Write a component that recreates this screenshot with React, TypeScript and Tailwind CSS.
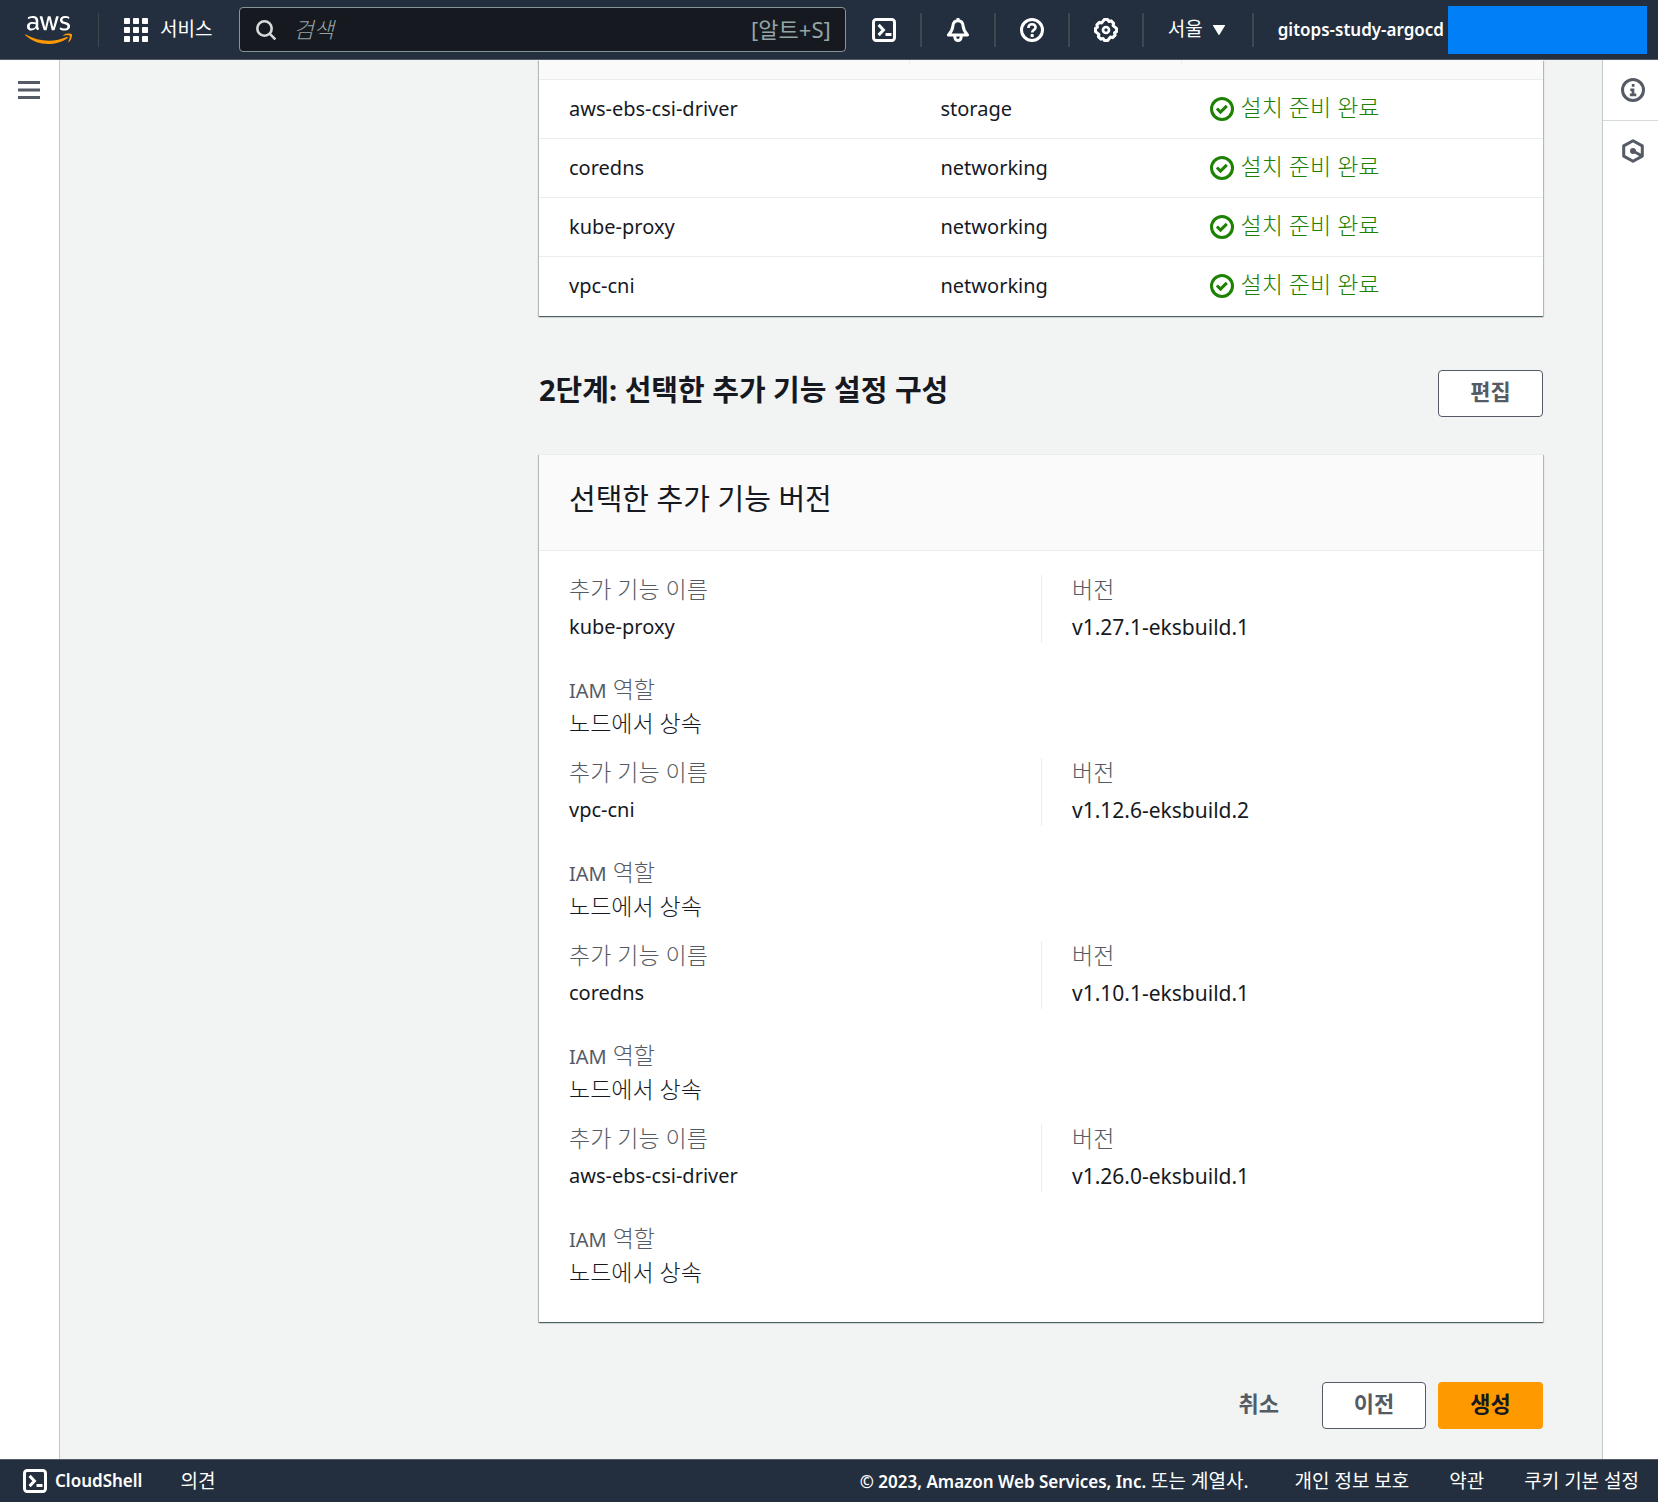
import type { ReactNode } from "react";
import { FaAws } from "react-icons/fa";

const addons = [
  { name: "aws-ebs-csi-driver", category: "storage" },
  { name: "coredns", category: "networking" },
  { name: "kube-proxy", category: "networking" },
  { name: "vpc-cni", category: "networking" },
];

const versions = [
  { name: "kube-proxy", version: "v1.27.1-eksbuild.1" },
  { name: "vpc-cni", version: "v1.12.6-eksbuild.2" },
  { name: "coredns", version: "v1.10.1-eksbuild.1" },
  { name: "aws-ebs-csi-driver", version: "v1.26.0-eksbuild.1" },
];

function Icon({ children }: { children: ReactNode }) {
  return (
    <svg
      viewBox="0 0 16 16"
      className="size-6 shrink-0"
      fill="none"
      stroke="currentColor"
      strokeWidth="2"
      aria-hidden="true"
    >
      {children}
    </svg>
  );
}

function CloudShellIcon() {
  return (
    <Icon>
      <rect x="1" y="1" width="14" height="14" rx="1.8" />
      <path d="M4.4 4.6 7.6 8l-3.2 3.4" />
      <path d="M9 11h4" />
    </Icon>
  );
}

function BellIcon() {
  return (
    <Icon>
      <path
        d="M8 1.8c1.9 0 3.2 1.4 3.4 3.4.2 2.5 1 4 3 6.1H1.6c2-2.1 2.8-3.6 3-6.1C4.8 3.2 6.1 1.8 8 1.8Z"
        strokeLinejoin="round"
      />
      <path d="M8 0v2" />
      <path d="M5.9 11.5v1.4a2.1 2.1 0 0 0 4.2 0v-1.4" />
    </Icon>
  );
}

function HelpIcon() {
  return (
    <Icon>
      <circle cx="8" cy="8" r="7" />
      <path d="M5.6 6.6c0-1.6 1-2.5 2.4-2.5s2.4.9 2.4 2.2c0 1.7-2.3 1.5-2.3 3.4" strokeWidth="1.7" />
      <path d="M8.1 10.7v2" />
    </Icon>
  );
}

function GearIcon() {
  return (
    <Icon>
      <path
        d="M6.9 1h2.2l.8 1.300 1.500-.4 1.700 1.700-.4 1.500L15 6.900v2.200l-1.300.8.4 1.500-1.700 1.700-1.500-.4L9.100 15H6.900l-.8-1.300-1.500.4-1.700-1.700.4-1.500L1 9.100V6.900l1.300-.8-.4-1.500 1.700-1.700 1.500.4Z"
        strokeLinejoin="round"
      />
      <circle cx="8" cy="8" r="2" strokeWidth="1.8" />
    </Icon>
  );
}

function CheckIcon() {
  return (
    <Icon>
      <circle cx="8" cy="8" r="7" />
      <path d="m4.6 7.7 2.4 2.4 4.2-4.2" />
    </Icon>
  );
}

function InfoIcon() {
  return (
    <Icon>
      <circle cx="8" cy="8" r="7" />
      <path d="M7.2 4.9h1.8M6.200 7.900H8v3.200M5.900 11.300h4.300" strokeWidth="1.8" />
    </Icon>
  );
}

function HexIcon() {
  return (
    <Icon>
      <path d="m8 1.200 6.200 3.400v6.800L8 14.800l-6.200-3.400V4.600Z" strokeLinejoin="round" />
      <circle cx="8" cy="8" r="2" fill="currentColor" stroke="none" />
      <path d="m8 8 5.500 3" />
    </Icon>
  );
}

function Divider() {
  return <div className="h-[34px] w-0.5 shrink-0 bg-[#414750]" />;
}

function TopBar() {
  return (
    <header className="flex h-[60px] shrink-0 items-center border-b border-[#545b64] bg-[#232f3e] pr-[11px] pl-[25px] text-white">
      <svg width="0" height="0" className="absolute" aria-hidden="true">
        <defs>
          <linearGradient id="aws-fill" gradientUnits="userSpaceOnUse" x1="0" y1="0" x2="0" y2="512">
            <stop offset="0.59" stopColor="#ffffff" />
            <stop offset="0.59" stopColor="#ff9900" />
          </linearGradient>
        </defs>
      </svg>
      <a href="#home" aria-label="AWS" className="mr-[26px] shrink-0">
        <FaAws className="h-[38px] w-[47px] fill-[url(#aws-fill)]" />
      </a>
      <div className="h-[34px] w-px bg-[#414750]" />
      <button className="ml-[25px] flex shrink-0 items-center gap-3 text-[19px]">
        <svg viewBox="0 0 24 24" className="size-6" fill="currentColor" aria-hidden="true">
          {[0, 9, 18].map((y) =>
            [0, 9, 18].map((x) => <rect key={`${x}-${y}`} x={x} y={y} width="6" height="6" rx="0.8" />),
          )}
        </svg>
        서비스
      </button>
      <label className="mr-[26px] ml-[27px] flex h-[45px] min-w-0 flex-1 items-center rounded-sm border border-[#879596] bg-[#16191f] pr-3.5 pl-4 text-[22px] text-[#95a5a6]">
        <svg viewBox="0 0 20 20" className="size-5 shrink-0 text-[#d5dbdb]" fill="none" stroke="currentColor" strokeWidth="2.6" aria-hidden="true">
          <circle cx="8.5" cy="8.5" r="7.2" />
          <path d="m13.6 13.6 5.8 5.8" />
        </svg>
        <input
          type="search"
          aria-label="검색"
          placeholder="검색"
          className="ml-[17px] min-w-0 flex-1 bg-transparent font-light outline-none placeholder:text-[#95a5a6] placeholder:italic"
        />
        <span>[알트+S]</span>
      </label>
      <div className="flex shrink-0 items-center gap-6">
        <button aria-label="CloudShell">
          <CloudShellIcon />
        </button>
        <Divider />
        <button aria-label="알림">
          <BellIcon />
        </button>
        <Divider />
        <button aria-label="도움말">
          <HelpIcon />
        </button>
        <Divider />
        <button aria-label="설정">
          <GearIcon />
        </button>
        <Divider />
        <button className="flex items-center gap-2.5 pr-[3px] text-[19px]">
          서울
          <svg viewBox="0 0 12 10" className="h-2.5 w-3" fill="currentColor" aria-hidden="true">
            <path d="M.6 0h10.8a.5.5 0 0 1 .4.9L6.6 9.6a.7.7 0 0 1-1.2 0L.2.9A.5.5 0 0 1 .6 0Z" />
          </svg>
        </button>
        <Divider />
        <button className="flex items-center gap-1 text-[17px] font-semibold">
          gitops-study-argocd
          <span className="h-12 w-[199px] bg-[#007ff7]" />
        </button>
      </div>
    </header>
  );
}

function Card({ children }: { children: ReactNode }) {
  return (
    <section className="bg-white shadow-[0_1px_1px_0_rgba(0,28,36,0.5),1px_1px_1px_0_rgba(0,28,36,0.2),-1px_1px_1px_0_rgba(0,28,36,0.2)]">
      {children}
    </section>
  );
}

function AddonTable() {
  return (
    <Card>
      <table className="w-full table-fixed border-collapse text-left text-[20px]">
        <thead className="bg-[#fafafa]">
          <tr className="h-[19px] border-b border-[#eaeded] align-top">
            <th aria-label="추가 기능 이름" className="w-[37%] p-0">
              <div className="h-[5px] border-r border-[#eaeded]" />
            </th>
            <th aria-label="유형" className="w-[27%] p-0">
              <div className="h-[5px] border-r border-[#eaeded]" />
            </th>
            <th aria-label="상태" className="p-0" />
          </tr>
        </thead>
        <tbody>
          {addons.map((addon) => (
            <tr key={addon.name} className="h-[59px] border-b border-[#eaeded] last:border-white">
              <td className="py-0 pl-[30px]">{addon.name}</td>
              <td className="py-0 pl-[30px]">{addon.category}</td>
              <td className="py-0 pl-7">
                <span className="flex items-center gap-[7px] text-[23px] leading-6 font-light text-[#1d8102]">
                  <CheckIcon />
                  <span className="pb-1">설치 준비 완료</span>
                </span>
              </td>
            </tr>
          ))}
        </tbody>
      </table>
    </Card>
  );
}

function Field({ label, children }: { label: ReactNode; children: ReactNode }) {
  return (
    <div>
      <dt className="text-[23px] leading-7 font-light text-[#545b64]">{label}</dt>
      {children}
    </div>
  );
}

export default function App() {
  return (
    <div
      lang="ko"
      className="flex min-h-screen flex-col bg-[#f2f3f3] font-['Noto_Sans','Noto_Sans_CJK_KR',sans-serif] text-[#16191f]"
    >
      <TopBar />
      <div className="flex flex-1">
        <nav className="w-[60px] shrink-0 border-r border-[#c3c8c8] bg-white pt-5 pl-[18px] text-[#545b64]">
          <button aria-label="메뉴">
            <svg viewBox="0 0 22 20" className="h-5 w-[22px]" fill="none" stroke="currentColor" strokeWidth="3" aria-hidden="true">
              <path d="M0 2.5h22M0 10h22M0 17.5h22" />
            </svg>
          </button>
        </nav>
        <main className="min-w-0 flex-1 pr-[59px] pl-[479px]">
          <AddonTable />
          <div className="mt-[54px] flex items-start justify-between">
            <h2 className="text-[29px] leading-10 font-bold">2단계: 선택한 추가 기능 설정 구성</h2>
            <button className="h-[47px] w-[105px] rounded-sm border border-[#545b64] bg-white pb-1 text-[22px] font-bold text-[#545b64]">
              편집
            </button>
          </div>
          <div className="mt-[37px]">
            <Card>
              <h3 className="h-[97px] border-y border-[#eaeded] bg-[#fafafa] px-[30px] pt-6 text-[29px] leading-10">
                선택한 추가 기능 버전
              </h3>
              <div className="flex flex-col gap-[15px] px-[30px] pt-6 pb-[30px]">
                {versions.map((item) => (
                  <dl key={item.name} className="grid grid-cols-2 gap-y-8">
                    <Field label="추가 기능 이름">
                      <dd className="mt-2 text-[20px] leading-8">{item.name}</dd>
                    </Field>
                    <div className="border-l border-[#eaeded] pl-[30px]">
                      <Field label="버전">
                        <dd className="mt-2 text-[21px] leading-8">{item.version}</dd>
                      </Field>
                    </div>
                    <Field
                      label={
                        <>
                          <span className="text-[20px] leading-none font-normal">IAM</span> 역할
                        </>
                      }
                    >
                      <dd className="mt-1 mb-1 text-[23px] leading-8 font-light">노드에서 상속</dd>
                    </Field>
                  </dl>
                ))}
              </div>
            </Card>
          </div>
          <div className="mt-[60px] mb-[30px] flex justify-end gap-3 text-[22px] font-bold text-[#545b64]">
            <button className="mr-[19px] h-[47px] px-3 pb-1">취소</button>
            <button className="h-[47px] w-[104px] rounded-sm border border-[#545b64] bg-white pb-1">이전</button>
            <button className="h-[47px] w-[105px] rounded-sm bg-[#ff9900] pb-1 text-[#16191f]">생성</button>
          </div>
        </main>
        <aside className="w-14 shrink-0 border-l border-[#c3c8c8] bg-white text-[#545b64]">
          <button aria-label="정보" className="flex h-[61px] w-full items-center justify-center border-b border-[#d5dbdb] pl-1">
            <InfoIcon />
          </button>
          <button aria-label="자습서" className="flex h-[60px] w-full items-center justify-center pl-1">
            <HexIcon />
          </button>
        </aside>
      </div>
      <footer className="flex h-[43px] shrink-0 items-center justify-between border-t border-[#545b64] bg-[#232f3e] pr-[19px] pl-[23px] text-[19px] text-white">
        <div className="flex items-center gap-[38px]">
          <button className="flex items-center gap-2 text-[17px] font-semibold">
            <CloudShellIcon />
            CloudShell
          </button>
          <button>의견</button>
        </div>
        <div className="flex items-center gap-10">
          <span className="mr-1.5">
            <span className="text-[17px] font-semibold">© 2023, Amazon Web Services, Inc.</span> 또는 계열사.
          </span>
          <a href="#privacy">개인 정보 보호</a>
          <a href="#terms">약관</a>
          <a href="#cookies">쿠키 기본 설정</a>
        </div>
      </footer>
    </div>
  );
}
